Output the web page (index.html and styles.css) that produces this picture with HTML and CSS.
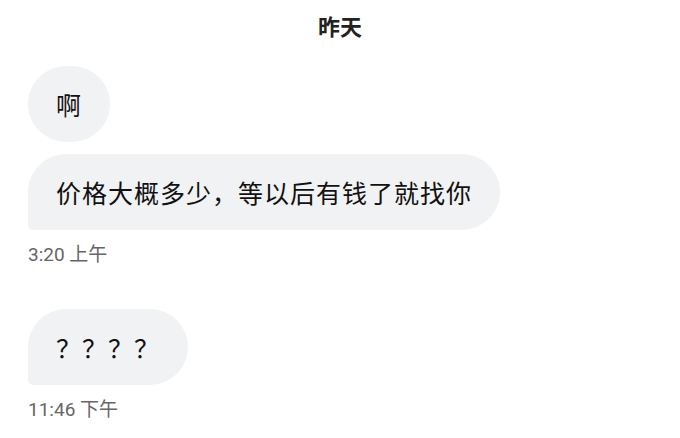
FILE: index.html
```html
<!DOCTYPE html>
<html lang="zh-CN">
<head>
  <meta charset="UTF-8" />
  <meta name="viewport" content="width=device-width, initial-scale=1.0"/>
  <title>聊天</title>
  <link rel="stylesheet" href="styles.css">
</head>
<body>

  <div class="day">昨天</div>

  <div class="group">
    <div class="bubble round">啊</div>
    <div class="bubble last">价格大概多少，等以后有钱了就找你</div>
    <div class="time">3:20 上午</div>
  </div>

  <div class="group second">
    <div class="bubble last">？？？？</div>
    <div class="time">11:46 下午</div>
  </div>

</body>
</html>
```

FILE: styles.css
```css
body {
  margin: 0;
  padding: 0;
  background-color: #fff;
  font-family: 'Noto Sans CJK SC', 'Noto Sans', sans-serif;
  color: #111;
}

.day {
  text-align: center;
  font-size: 22px;
  font-weight: bold;
  color: #222;
  padding-top: 9px;
  line-height: 32px;
}

.group {
  display: flex;
  flex-direction: column;
  align-items: flex-start;
  gap: 12px;
  padding: 25px 28px 0;
}

.group.second {
  padding-top: 43px;
}

.bubble {
  background-color: #f1f2f4;
  font-size: 25px;
  line-height: 36px;
  letter-spacing: 1px;
  padding: 20px 28px;
  border-radius: 38px;
}

.bubble.last {
  border-radius: 38px 38px 38px 5px;
}

.time {
  font-family: Roboto, 'Noto Sans CJK SC', sans-serif;
  font-size: 19px;
  color: #666;
  line-height: 22px;
  margin-top: 2px;
}
```
